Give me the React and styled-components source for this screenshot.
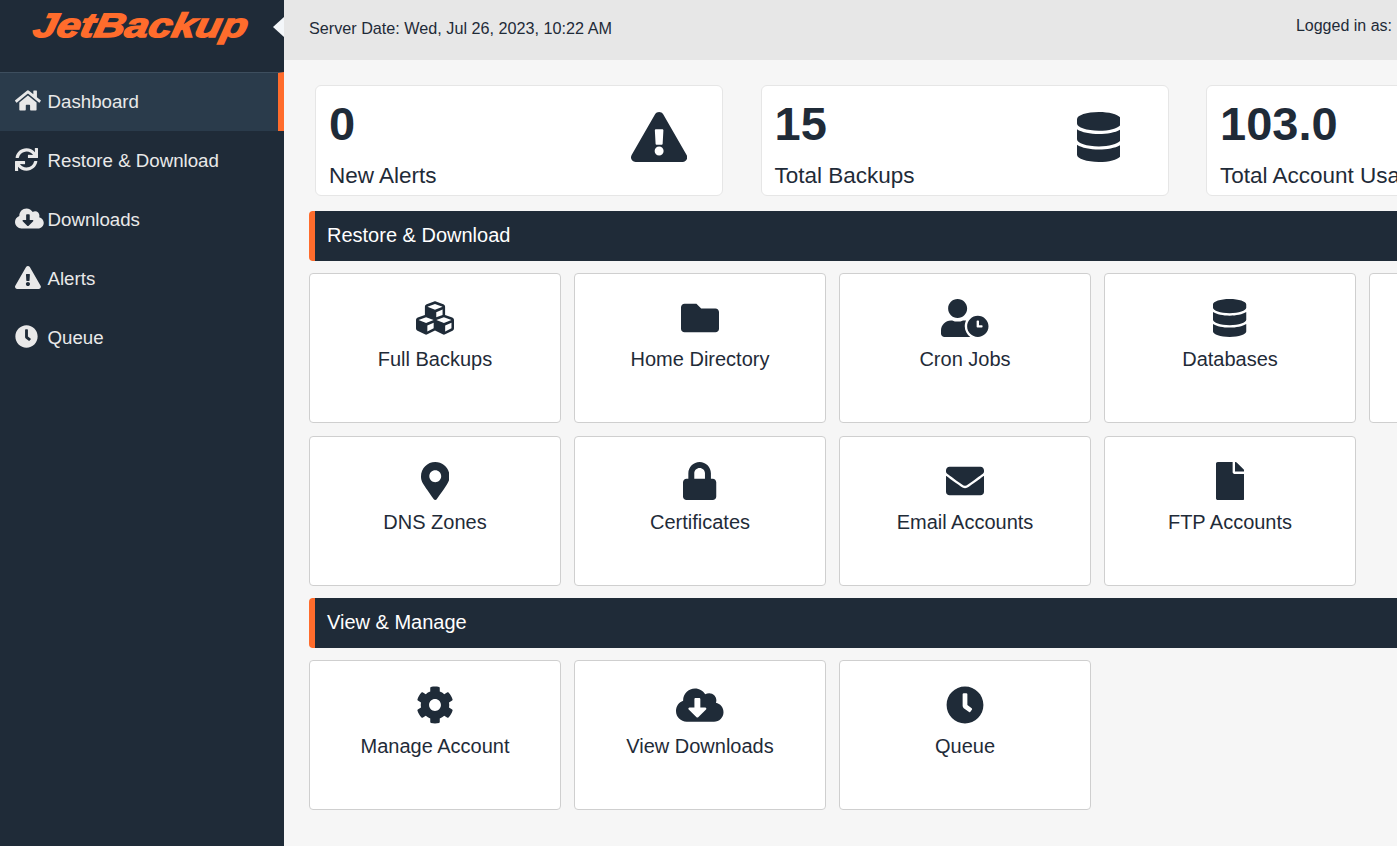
import React from "react";
import styled, { createGlobalStyle } from "styled-components";
import {
  FaHome, FaSync, FaCloudDownloadAlt, FaExclamationTriangle, FaClock, FaDatabase,
  FaCubes, FaFolder, FaUserClock, FaMapMarkerAlt, FaLock, FaEnvelope, FaFile, FaCog,
} from "react-icons/fa";

const DARK = "#1f2b38";
const ORANGE = "#ff6c2c";

const Global = createGlobalStyle`
  html, body { margin: 0; padding: 0; height: 100%; overflow: hidden; }
  body { font-family: "Liberation Sans", Arial, sans-serif; background: #f6f6f6; color: ${DARK}; }
  * { box-sizing: border-box; }
`;

const Shell = styled.div`
  display: flex;
  width: 1397px;
  height: 846px;
  overflow: hidden;
`;

const Sidebar = styled.aside`
  position: relative;
  flex: 0 0 284px;
  background: ${DARK};
  display: flex;
  flex-direction: column;
`;

const LogoBar = styled.div`
  height: 72px;
  padding: 2px 0 0 34px;
`;

const Logo = styled.span`
  display: inline-block;
  font-family: "Liberation Sans", Arial, sans-serif;
  font-style: italic;
  font-weight: 700;
  font-size: 34px;
  line-height: 46px;
  color: ${ORANGE};
  -webkit-text-stroke: 1.4px ${ORANGE};
  white-space: nowrap;
  transform-origin: left center;
  transform: skewX(-12deg) scaleX(1.245);
`;

const Collapse = styled.span`
  position: absolute;
  right: 0;
  top: 17px;
  width: 0;
  height: 0;
  border-top: 10px solid transparent;
  border-bottom: 10px solid transparent;
  border-right: 11px solid #f4f7fa;
`;

const NavItem = styled.a`
  display: flex;
  align-items: center;
  height: 59px;
  padding-left: 15px;
  font-size: 18.7px;
  color: #e9e9e9;
  background: ${(p) => (p.$active ? "#2a3b4b" : "transparent")};
  border-top: 1px solid ${(p) => (p.$active ? "#3d4e5e" : "transparent")};
  border-right: 6px solid ${(p) => (p.$active ? ORANGE : "transparent")};
`;

const NavIcon = styled.span`
  flex: 0 0 32.5px;
  display: flex;
  margin-top: -3px;
  svg { height: 23px; width: ${(p) => p.$ratio * 23}px; display: block; }
`;

const Main = styled.main`
  flex: 1;
  min-width: 0;
  overflow: hidden;
`;

const Header = styled.header`
  height: 60px;
  background: #e7e7e7;
  display: flex;
  justify-content: space-between;
  padding: 19px 5px 0 25px;
  font-size: 16.2px;
  color: ${DARK};
  white-space: nowrap;
`;

const LoggedIn = styled.span`
  margin-top: -2px;
  font-size: 16px;
`;

const Stats = styled.section`
  display: flex;
  gap: 37.5px;
  padding: 25px 0 0 31px;
`;

const StatCard = styled.div`
  flex: 0 0 408px;
  height: 111px;
  background: #fff;
  border: 1px solid #e6e6e6;
  border-radius: 6px;
  padding-left: 13px;
  display: grid;
  grid-template-columns: 302px 1fr;
  align-items: start;
`;

const StatIcon = styled.span`
  display: block;
  margin-top: 26px;
  color: ${DARK};
  svg { height: 50px; width: ${(p) => p.$ratio * 50}px; display: block; }
`;

const StatText = styled.div`
  white-space: nowrap;
`;

const StatValue = styled.div`
  font-size: 47px;
  font-weight: 700;
  line-height: 54px;
  margin-top: 11px;
  color: ${DARK};
`;

const StatLabel = styled.div`
  font-size: 22.5px;
  line-height: 28px;
  margin-top: 11px;
  color: ${DARK};
`;

const Section = styled.section`
  padding-left: 25px;
  margin-top: ${(p) => p.$top}px;
`;

const SectionBar = styled.h2`
  margin: 0;
  height: 50px;
  display: flex;
  align-items: center;
  background: ${DARK};
  border-left: 6px solid ${ORANGE};
  border-radius: 4px 0 0 4px;
  padding: 0 0 2px 12px;
  font-size: 20px;
  font-weight: 400;
  color: #fff;
  width: 1500px;
`;

const TileGrid = styled.div`
  display: grid;
  grid-template-columns: repeat(5, 252px);
  gap: 13px;
  margin-top: 12px;
`;

const Tile = styled.a`
  height: 150px;
  background: #fff;
  border: 1px solid #cfcfcf;
  border-radius: 4px;
  display: flex;
  flex-direction: column;
  align-items: center;
  padding-top: 25px;
  font-size: 20px;
  color: ${DARK};
`;

const TileIcon = styled.span`
  display: block;
  height: 38px;
  color: ${DARK};
  svg { height: 38px; width: ${(p) => p.$ratio * 38}px; display: block; }
`;

const TileLabel = styled.span`
  margin-top: 11px;
  line-height: 22px;
`;

const stats = [
  { value: "0", label: "New Alerts", Icon: FaExclamationTriangle, ratio: 1.125 },
  { value: "15", label: "Total Backups", Icon: FaDatabase, ratio: 0.875 },
  { value: "103.0", label: "Total Account Usage", Icon: FaDatabase, ratio: 0.875 },
];

const nav = [
  { label: "Dashboard", Icon: FaHome, ratio: 1.125, active: true },
  { label: "Restore & Download", Icon: FaSync, ratio: 1 },
  { label: "Downloads", Icon: FaCloudDownloadAlt, ratio: 1.25 },
  { label: "Alerts", Icon: FaExclamationTriangle, ratio: 1.125 },
  { label: "Queue", Icon: FaClock, ratio: 1 },
];

const restore = [
  { label: "Full Backups", Icon: FaCubes, ratio: 1 },
  { label: "Home Directory", Icon: FaFolder, ratio: 1 },
  { label: "Cron Jobs", Icon: FaUserClock, ratio: 1.25 },
  { label: "Databases", Icon: FaDatabase, ratio: 0.875 },
  { label: "" },
  { label: "DNS Zones", Icon: FaMapMarkerAlt, ratio: 0.75 },
  { label: "Certificates", Icon: FaLock, ratio: 0.875 },
  { label: "Email Accounts", Icon: FaEnvelope, ratio: 1 },
  { label: "FTP Accounts", Icon: FaFile, ratio: 0.75 },
];

const manage = [
  { label: "Manage Account", Icon: FaCog, ratio: 1 },
  { label: "View Downloads", Icon: FaCloudDownloadAlt, ratio: 1.25 },
  { label: "Queue", Icon: FaClock, ratio: 1 },
];

const Tiles = ({ items }) => (
  <TileGrid>
    {items.map(({ label, Icon, ratio }, i) => (
      <Tile key={i}>
        {Icon && <TileIcon $ratio={ratio}><Icon /></TileIcon>}
        <TileLabel>{label}</TileLabel>
      </Tile>
    ))}
  </TileGrid>
);

export default function App() {
  return (
    <Shell>
      <Global />
      <Sidebar>
        <LogoBar>
          <Logo>JetBackup</Logo>
        </LogoBar>
        <Collapse />
        {nav.map(({ label, Icon, ratio, active }) => (
          <NavItem key={label} $active={active}>
            <NavIcon $ratio={ratio}><Icon /></NavIcon>
            {label}
          </NavItem>
        ))}
      </Sidebar>
      <Main>
        <Header>
          <span>Server Date: Wed, Jul 26, 2023, 10:22 AM</span>
          <LoggedIn>Logged in as:</LoggedIn>
        </Header>
        <Stats>
          {stats.map(({ value, label, Icon, ratio }) => (
            <StatCard key={label}>
              <StatText>
                <StatValue>{value}</StatValue>
                <StatLabel>{label}</StatLabel>
              </StatText>
              <StatIcon $ratio={ratio}><Icon /></StatIcon>
            </StatCard>
          ))}
        </Stats>
        <Section $top={15}>
          <SectionBar>Restore &amp; Download</SectionBar>
          <Tiles items={restore} />
        </Section>
        <Section $top={12}>
          <SectionBar>View &amp; Manage</SectionBar>
          <Tiles items={manage} />
        </Section>
      </Main>
    </Shell>
  );
}
